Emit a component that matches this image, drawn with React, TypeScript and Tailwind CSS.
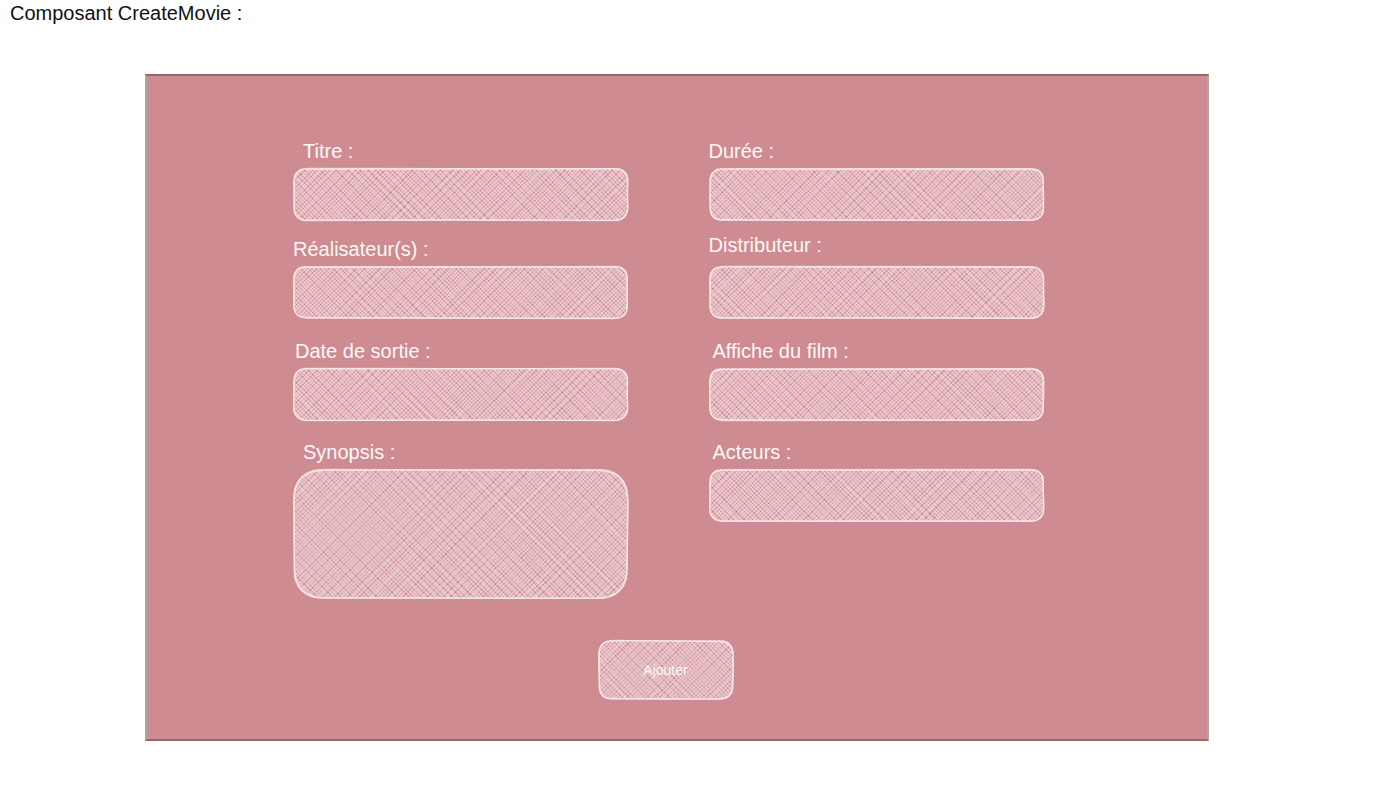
import { useId } from "react";

function noise(seed: number) {
  let s = seed * 7919 + 17;
  return () => {
    s = (s * 16807) % 2147483647;
    return s / 2147483647 - 0.5;
  };
}

function hatch(w: number, h: number, seed: number) {
  const rnd = noise(seed);
  const parts: string[] = [];
  for (let x = -h - 8; x < w + 8; x += 4) {
    const a = x + rnd() * 2;
    const b = x + h + rnd() * 2.4;
    parts.push(`M${a.toFixed(2)} 0L${b.toFixed(2)} ${h}`);
    const c = x + h + rnd() * 2.4;
    const d = x + rnd() * 2;
    parts.push(`M${c.toFixed(2)} 0L${d.toFixed(2)} ${h}`);
  }
  return parts;
}

function outline(w: number, h: number, r: number, seed: number) {
  const rnd = noise(seed);
  const j = () => rnd() * 1.2;
  const pt = (x: number, y: number) => `${(x + j()).toFixed(1)} ${(y + j()).toFixed(1)}`;
  return (
    `M${pt(r, 1)}Q${pt(w / 2, 1)} ${pt(w - r, 1)}Q${pt(w - 1, 1)} ${pt(w - 1, r)}` +
    `Q${pt(w - 1, h / 2)} ${pt(w - 1, h - r)}Q${pt(w - 1, h - 1)} ${pt(w - r, h - 1)}` +
    `Q${pt(w / 2, h - 1)} ${pt(r, h - 1)}Q${pt(1, h - 1)} ${pt(1, h - r)}` +
    `Q${pt(1, h / 2)} ${pt(1, r)}Q${pt(1, 1)} ${pt(r, 1)}`
  );
}

function Sketch({ w, h, r, seed }: { w: number; h: number; r: number; seed: number }) {
  const id = useId();
  return (
    <svg
      className="pointer-events-none absolute inset-0 h-full w-full overflow-visible"
      viewBox={`0 0 ${w} ${h}`}
      preserveAspectRatio="none"
      fill="none"
      aria-hidden="true"
    >
      <clipPath id={id}>
        <rect x="0.5" y="0" width={w - 1} height={h - 0.5} rx={r * 0.8} />
      </clipPath>
      <g clipPath={`url(#${id})`} stroke="#f6e6e9" strokeWidth="1.6" strokeOpacity="0.54">
        {hatch(w, h, seed).map((d, i) => (
          <path key={i} d={d} />
        ))}
      </g>
      <path d={outline(w, h, r, seed + 3)} stroke="#f8eaec" strokeWidth="1.3" strokeOpacity="0.75" />
      <path d={outline(w, h, r, seed + 8)} stroke="#f8eaec" strokeWidth="1.3" strokeOpacity="0.75" />
    </svg>
  );
}

type FieldProps = {
  id: string;
  label: string;
  seed: number;
  className?: string;
  labelClassName?: string;
  multiline?: boolean;
};

function Field({ id, label, seed, className = "", labelClassName = "mb-[5px]", multiline = false }: FieldProps) {
  return (
    <div className={className}>
      <label htmlFor={id} className={`block text-xl leading-6 ${labelClassName}`}>
        {label}
      </label>
      <div className={multiline ? "relative h-[130px]" : "relative h-[53px]"}>
        <Sketch w={336} h={multiline ? 130 : 53} r={multiline ? 32 : 14} seed={seed} />
        {multiline ? (
          <textarea id={id} className="relative block h-full w-full resize-none rounded-[32px] bg-transparent px-6 py-4 outline-none" />
        ) : (
          <input id={id} type="text" className="relative block h-full w-full rounded-xl bg-transparent px-4 outline-none" />
        )}
      </div>
    </div>
  );
}

export default function App() {
  return (
    <main className="min-h-screen bg-white pb-11 font-['Liberation_Sans',Arial,sans-serif] text-[#111111]">
      <h1 className="px-2.5 pt-px text-xl leading-6">Composant CreateMovie :</h1>
      <form
        onSubmit={(e) => e.preventDefault()}
        className="mt-[49px] mr-[167px] ml-[145px] border-2 border-x-[#aca3a4] border-y-[#94696d] bg-[#ce8b91] pt-[63px] pr-[163px] pb-[39px] pl-[146px] text-[#fdf8f8]"
      >
        <div className="grid grid-cols-2 gap-20">
          <div>
            <Field id="titre" label="Titre :" seed={1} labelClassName="mb-[5px] pl-2.5" />
            <Field id="realisateurs" label="Réalisateur(s) :" seed={2} className="mt-4" />
            <Field id="sortie" label="Date de sortie :" seed={3} className="mt-5" labelClassName="mb-[5px] pl-0.5" />
            <Field id="synopsis" label="Synopsis :" seed={4} className="mt-[19px]" labelClassName="mb-[5px] pl-2.5" multiline />
          </div>
          <div>
            <Field id="duree" label="Durée :" seed={5} />
            <Field id="distributeur" label="Distributeur :" seed={6} className="mt-3" labelClassName="mb-[9px]" />
            <Field id="affiche" label="Affiche du film :" seed={7} className="mt-5" labelClassName="mb-[5px] pl-1" />
            <Field id="acteurs" label="Acteurs :" seed={8} className="mt-[19px]" labelClassName="mb-[5px] pl-1" />
          </div>
        </div>
        <div className="mt-[41px] flex justify-center pr-1.5">
          <button type="submit" className="relative h-[60px] w-[136px] text-sm">
            <Sketch w={136} h={60} r={15} seed={9} />
            <span className="relative">Ajouter</span>
          </button>
        </div>
      </form>
    </main>
  );
}
